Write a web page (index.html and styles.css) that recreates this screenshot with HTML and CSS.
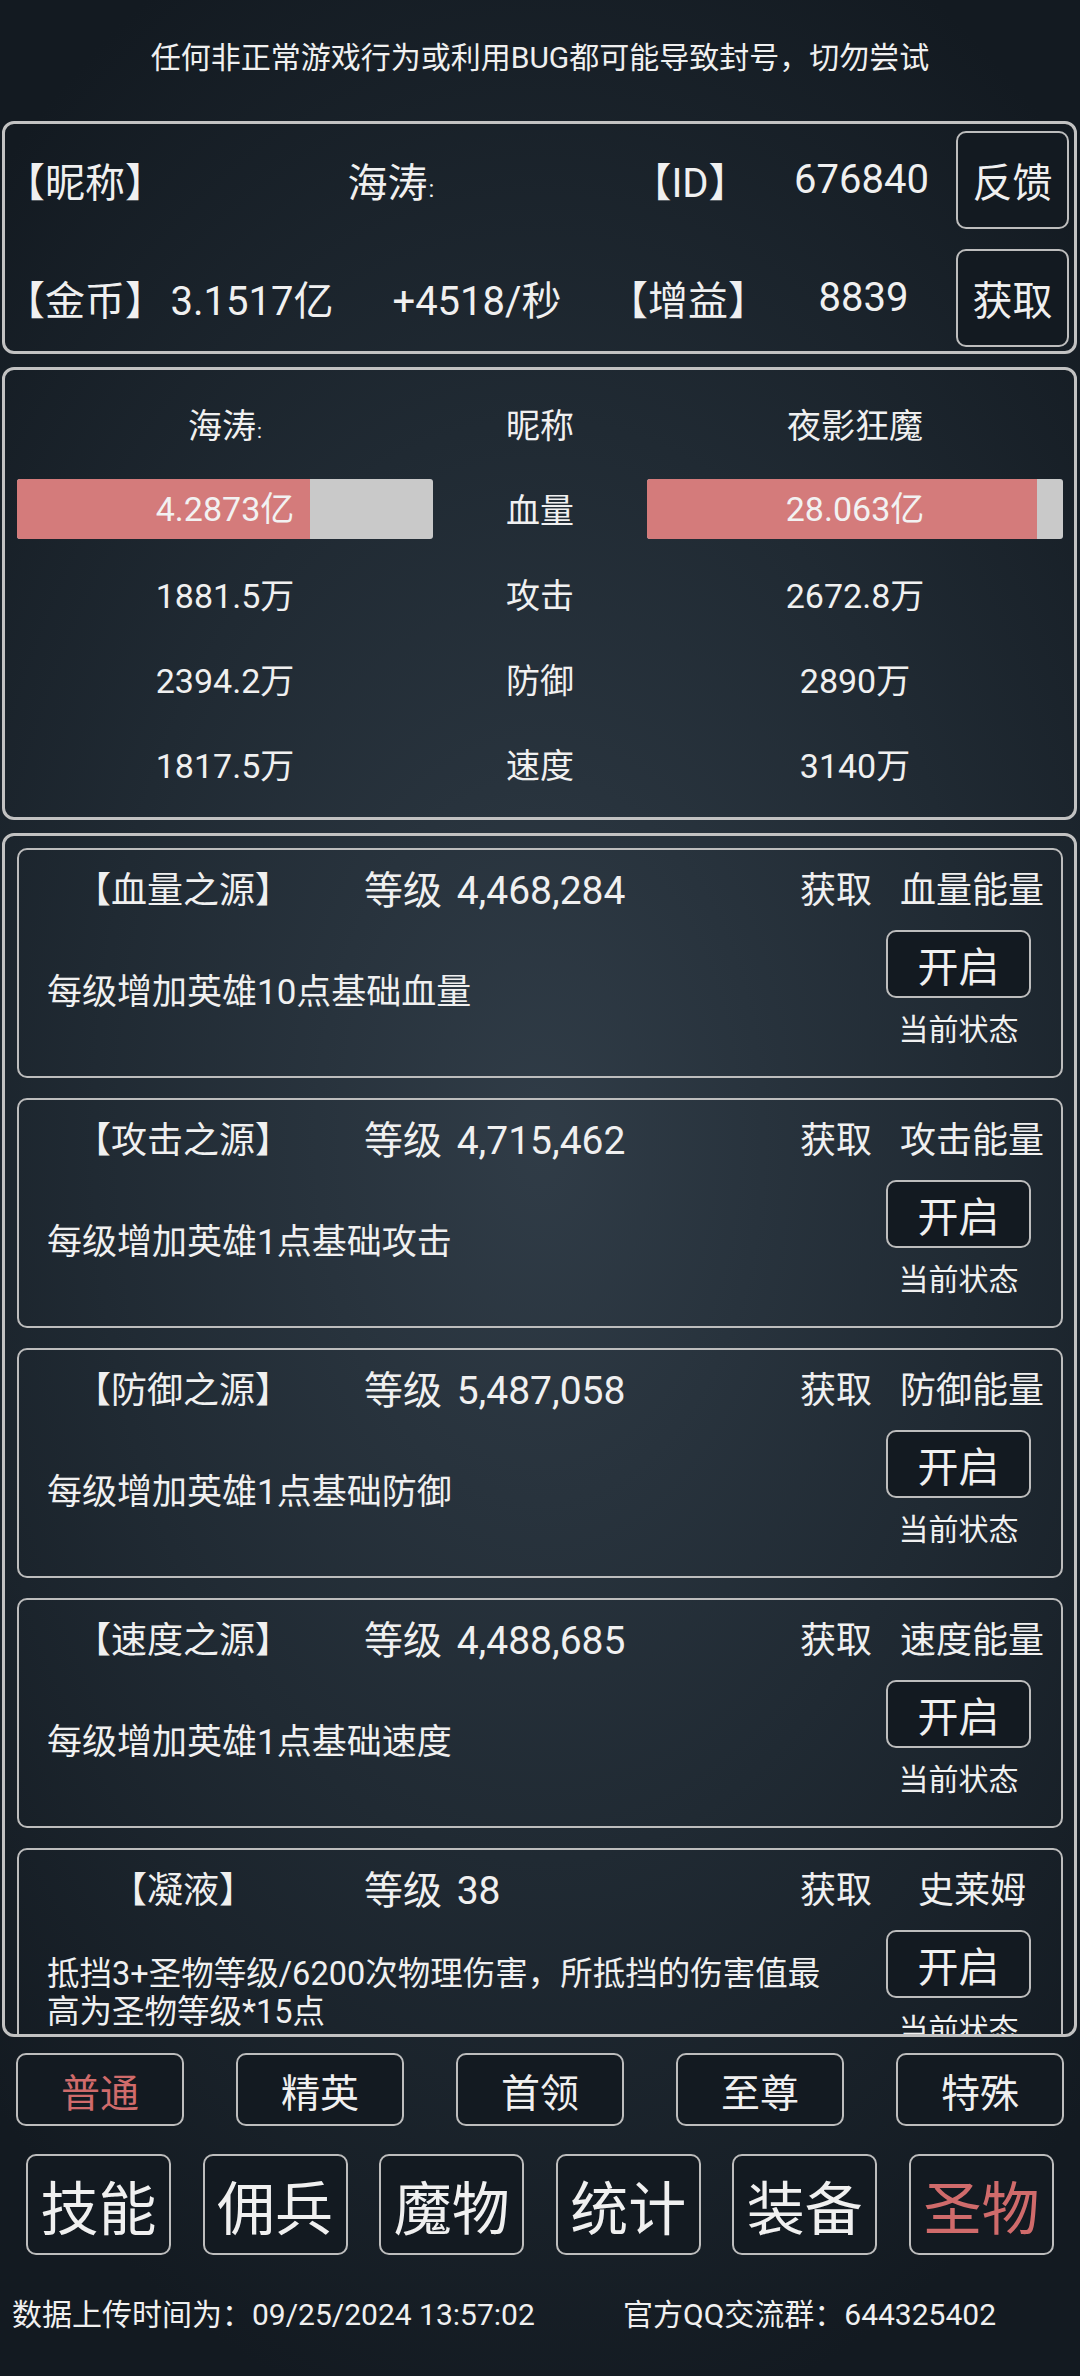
FILE: index.html
```html
<!DOCTYPE html>
<html>
<head>
    <meta charset="utf-8">
    <title>圣物</title>
    <link rel="stylesheet" href="styles.css">
</head>
<body>
    <div class="notice">任何非正常游戏行为或利用BUG都可能导致封号，切勿尝试</div>

    <div class="panel info">
        <div class="info-row row-one">
            <div>【昵称】</div>
            <div class="name">海涛<span class="dots">:</span></div>
            <div>【ID】</div>
            <div class="pad">676840</div>
            <button class="box-btn">反馈</button>
        </div>
        <div class="info-row row-two">
            <div>【金币】</div>
            <div>3.1517亿</div>
            <div>+4518/秒</div>
            <div>【增益】</div>
            <div>8839</div>
            <button class="box-btn">获取</button>
        </div>
    </div>

    <div class="panel stats">
        <div class="stat-row">
            <div class="name">海涛<span class="dots">:</span></div>
            <div>昵称</div>
            <div>夜影狂魔</div>
        </div>
        <div class="stat-row">
            <div class="hp-bar"><div class="hp-fill" style="width: 70.4%"></div><span>4.2873亿</span></div>
            <div>血量</div>
            <div class="hp-bar"><div class="hp-fill" style="width: 93.8%"></div><span>28.063亿</span></div>
        </div>
        <div class="stat-row">
            <div>1881.5万</div>
            <div>攻击</div>
            <div>2672.8万</div>
        </div>
        <div class="stat-row">
            <div>2394.2万</div>
            <div>防御</div>
            <div>2890万</div>
        </div>
        <div class="stat-row">
            <div>1817.5万</div>
            <div>速度</div>
            <div>3140万</div>
        </div>
    </div>

    <div class="panel relics" id="relicList"></div>

    <div class="tabs">
        <button class="tab active">普通</button>
        <button class="tab">精英</button>
        <button class="tab">首领</button>
        <button class="tab">至尊</button>
        <button class="tab">特殊</button>
    </div>

    <div class="nav">
        <button class="nav-btn">技能</button>
        <button class="nav-btn">佣兵</button>
        <button class="nav-btn">魔物</button>
        <button class="nav-btn">统计</button>
        <button class="nav-btn">装备</button>
        <button class="nav-btn active">圣物</button>
    </div>

    <div class="footer">
        <span>数据上传时间为：09/25/2024 13:57:02</span>
        <span>官方QQ交流群：644325402</span>
    </div>

    <script>
        // Relic cards in the scroll list
        const relics = [
            { title: "【血量之源】", level: "4,468,284", source: "血量能量", desc: "每级增加英雄10点基础血量" },
            { title: "【攻击之源】", level: "4,715,462", source: "攻击能量", desc: "每级增加英雄1点基础攻击" },
            { title: "【防御之源】", level: "5,487,058", source: "防御能量", desc: "每级增加英雄1点基础防御" },
            { title: "【速度之源】", level: "4,488,685", source: "速度能量", desc: "每级增加英雄1点基础速度" },
            { title: "【凝液】", level: "38", source: "史莱姆", desc: "抵挡3+圣物等级/6200次物理伤害，所抵挡的伤害值最高为圣物等级*15点", long: true }
        ];

        const list = document.getElementById("relicList");

        relics.forEach(function(relic) {
            const card = document.createElement("div");
            card.className = "card";
            card.innerHTML =
                '<div class="card-top">' +
                    '<div class="card-title">' + relic.title + '</div>' +
                    '<div class="card-level">等级 ' + relic.level + '</div>' +
                    '<div class="card-get">获取</div>' +
                    '<div class="card-source">' + relic.source + '</div>' +
                '</div>' +
                '<div class="card-body">' +
                    '<div class="card-desc' + (relic.long ? ' long' : '') + '">' + relic.desc + '</div>' +
                    '<div class="card-side">' +
                        '<button class="open-btn">开启</button>' +
                        '<div class="state">当前状态</div>' +
                    '</div>' +
                '</div>';
            list.appendChild(card);
        });
    </script>
</body>
</html>
```

FILE: styles.css
```css
body {
    margin: 0;
    width: 1080px;
    height: 2376px;
    overflow: hidden;
    font-family: Roboto, "Noto Sans CJK SC", sans-serif;
    color: #f0f0f0;
    background: radial-gradient(ellipse 75% 55% at 50% 48%, #303c47 0%, #202a33 55%, #131a21 100%);
}

button {
    font-family: inherit;
    color: #f0f0f0;
    background: #131a21;
    border: 2px solid #bdbdbd;
    border-radius: 10px;
    padding: 0;
    box-sizing: border-box;
}

.notice {
    height: 121px;
    box-sizing: border-box;
    padding-top: 38px;
    line-height: 40px;
    font-size: 30px;
    text-align: center;
}

.panel {
    margin: 0 3px 0 2px;
    border: 3px solid #c2c2c2;
    border-radius: 12px;
    box-sizing: border-box;
}

.name .dots {
    font-size: 0.6em;
    margin-left: 1px;
}

/* player info */
.info {
    height: 233px;
    padding: 0 5px 0 0;
    display: flex;
    flex-direction: column;
    gap: 11px;
}

.info-row {
    display: grid;
    height: 108px;
    align-items: center;
    text-align: center;
    font-size: 40px;
}

.row-one {
    grid-template-columns: 150px 472px 126px 203px 113px;
}

.row-one .pad {
    padding-left: 14px;
}

.row-two {
    grid-template-columns: 150px 194px 256px 166px 185px 113px;
}

.info-row:first-child {
    margin-top: 2px;
}

.box-btn {
    height: 98px;
    width: 113px;
    font-size: 40px;
}

/* battle stats */
.stats {
    margin-top: 13px;
    height: 453px;
    padding: 11px 12px 0;
}

.stat-row {
    display: grid;
    grid-template-columns: 416px 214px 416px;
    height: 85px;
    align-items: center;
    text-align: center;
    font-size: 34px;
}

.hp-bar {
    position: relative;
    height: 60px;
    background: #c9c9c9;
    border-radius: 3px;
    overflow: hidden;
}

.hp-fill {
    height: 100%;
    background: #d47b7b;
}

.hp-bar span {
    position: absolute;
    left: 0;
    right: 0;
    top: 0;
    line-height: 60px;
    color: #f2f2f2;
}

/* relic list */
.relics {
    margin-top: 13px;
    height: 1204px;
    overflow: hidden;
    padding: 12px 11px 0 12px;
    display: flex;
    flex-direction: column;
    gap: 20px;
}

.card {
    flex: none;
    height: 230px;
    border: 2px solid #bdbdbd;
    border-radius: 10px;
    box-sizing: border-box;
}

.card-top {
    display: flex;
    height: 74px;
    align-items: center;
    font-size: 36px;
}

.card-title {
    width: 328px;
    text-align: center;
}

.card-level {
    width: 439px;
    padding-left: 17px;
    box-sizing: border-box;
    font-size: 39px;
    word-spacing: 5px;
}

.card-get {
    width: 100px;
    text-align: center;
}

.card-source {
    width: 172px;
    text-align: center;
}

.card-body {
    display: flex;
    height: 152px;
}

.card-desc {
    flex: 1;
    display: flex;
    align-items: center;
    padding: 0 55px 14px 28px;
    font-size: 35px;
    line-height: 38px;
}

.card-desc.long {
    font-size: 32.5px;
}

.card-side {
    width: 145px;
    margin-right: 30px;
    text-align: center;
}

.open-btn {
    margin-top: 6px;
    width: 145px;
    height: 68px;
    font-size: 41px;
}

.state {
    margin-top: 14px;
    line-height: 36px;
    font-size: 30px;
}

/* bottom tabs */
.tabs {
    display: flex;
    gap: 52px;
    margin: 16px 0 0 16px;
}

.tab {
    width: 168px;
    height: 73px;
    font-size: 39px;
}

.nav {
    display: flex;
    gap: 31.6px;
    margin: 28px 0 0 26px;
}

.nav-btn {
    width: 145px;
    height: 101px;
    font-size: 58px;
}

.tab.active,
.nav-btn.active {
    color: #d06b6b;
}

.footer {
    display: flex;
    margin-top: 40px;
    padding-left: 12px;
    line-height: 40px;
    font-size: 30px;
}

.footer span:first-child {
    width: 611px;
}
```
